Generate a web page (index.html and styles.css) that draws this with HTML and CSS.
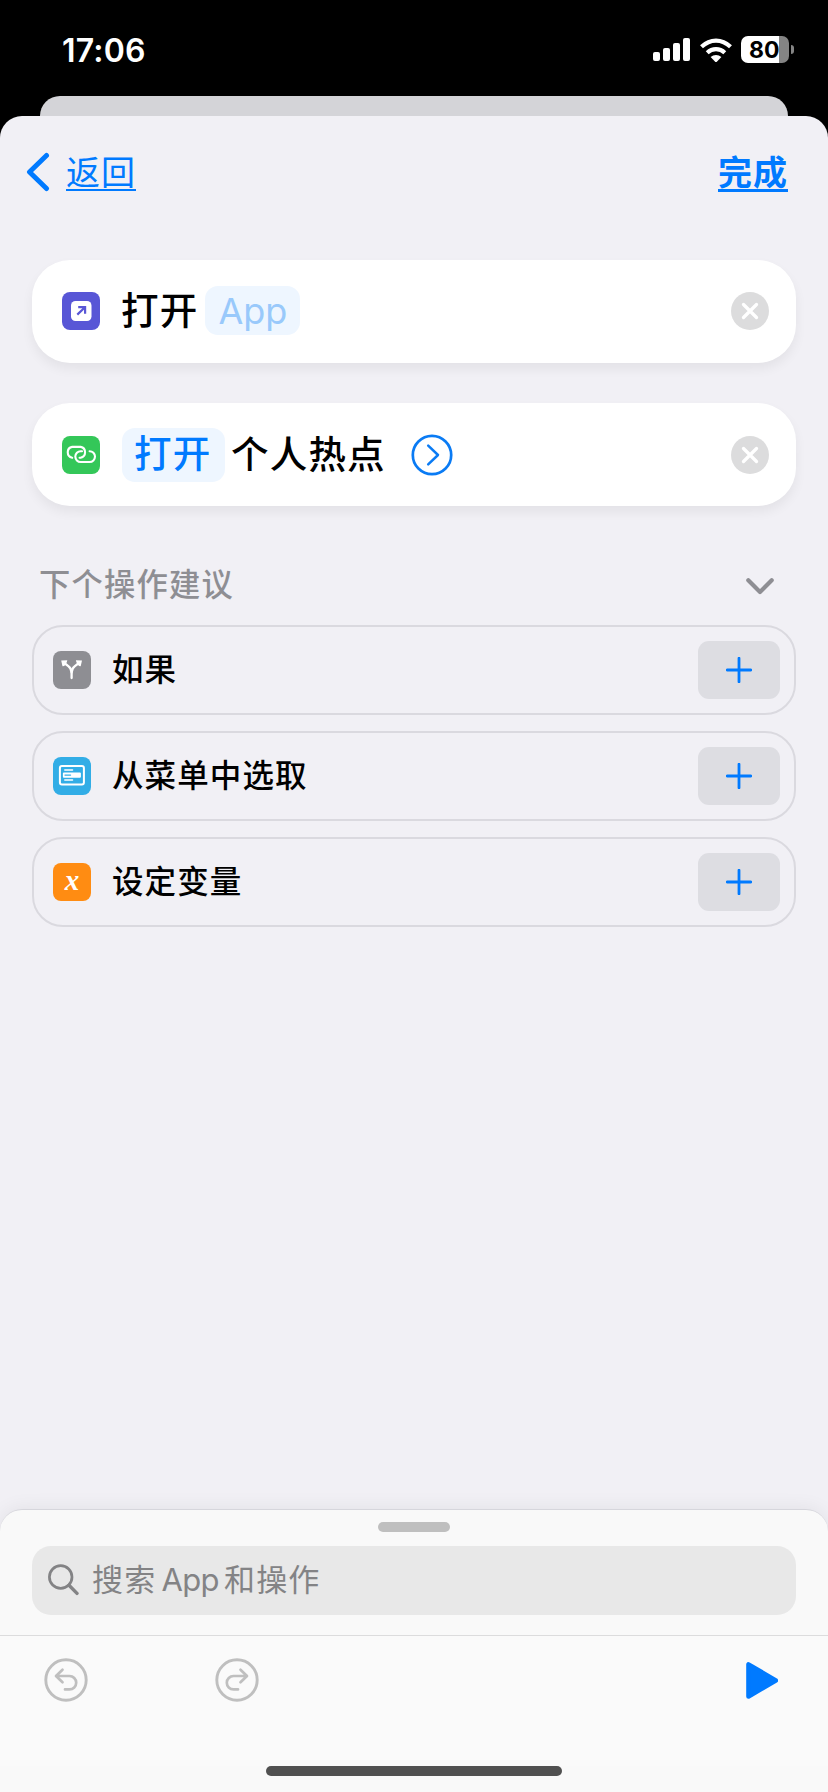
FILE: index.html
```html
<!DOCTYPE html>
<html lang="zh-CN">
<head>
<meta charset="utf-8">
<title>快捷指令</title>
<link rel="stylesheet" href="styles.css">
</head>
<body>
<div class="screen">
  <header class="status">
    <span class="time">17:06</span>
    <div class="indicators">
      <svg class="signal" width="37" height="23" viewBox="0 0 37 23" fill="#fff"><rect x="0" y="14" width="7" height="9" rx="2"/><rect x="10" y="10" width="7" height="13" rx="2"/><rect x="20" y="5" width="7" height="18" rx="2"/><rect x="30" y="0" width="7" height="23" rx="2"/></svg>
      <svg class="wifi" width="32" height="24" viewBox="0 0 32 24"><g fill="none" stroke="#fff" stroke-width="4.2"><path d="M1.5 8.8Q8 2.6 16 2.6T30.500 8.800"/><path d="M7.200 14.700Q11 11.200 16 11.200T24.800 14.700"/></g><path fill="#fff" d="M10.600 19Q13 17 16 17T21.400 19L16.600 23.900Q16 24.400 15.400 23.900Z"/></svg>
      <div class="battery"><span class="level">80</span></div>
      <span class="battery-tip"></span>
    </div>
  </header>
  <div class="sheet-behind"></div>
  <main class="sheet">
    <nav class="nav">
      <a class="back"><svg width="24" height="40" viewBox="0 0 24 40" fill="none" stroke="#007aff" stroke-width="5" stroke-linecap="round" stroke-linejoin="round"><path d="M20.500 3.500L3.500 20L20.500 36.500"/></svg><span class="link">返回</span></a>
      <a class="link done">完成</a>
    </nav>

    <section class="actions">
      <article class="card open-app">
        <svg class="tile" viewBox="0 0 38 38"><rect width="38" height="38" rx="8" fill="#5856d6"/><rect x="9" y="9" width="20.500" height="20" rx="4.500" fill="#fff"/><path d="M15.300 22.600L23 15.300M16.200 15.200H23.100V21.800" fill="none" stroke="#5856d6" stroke-width="2.200"/></svg>
        <span class="label">打开</span>
        <span class="token placeholder">App</span>
        <svg class="remove" viewBox="0 0 38 38"><circle cx="19" cy="19" r="19" fill="#dcdcdd"/><path d="M12.500 12.500L25.500 25.500M25.500 12.500L12.500 25.500" stroke="#fff" stroke-width="3.300" stroke-linecap="round"/></svg>
      </article>
      <article class="card">
        <svg class="tile" viewBox="0 0 38 38"><rect width="38" height="38" rx="8" fill="#34c759"/><g fill="none" stroke="#fff" stroke-width="2.100" stroke-linecap="round"><path d="M10.200 21.700A5.500 5.500 0 0 1 10.200 10.900H18.600A5.500 5.500 0 0 1 18.600 21.700H17.600"/><path d="M27.600 15.200A5.400 5.400 0 0 1 27.600 26H18.700A5.400 5.400 0 0 1 18.700 15.200H20"/></g></svg>
        <span class="token value">打开</span>
        <span class="label subject">个人热点</span>
        <svg class="disclose" width="42" height="42" viewBox="0 0 42 42" fill="none" stroke="#0a7bf4" stroke-linecap="round" stroke-linejoin="round"><circle cx="21" cy="21" r="19.200" stroke-width="2.700"/><path d="M17.200 11.700L27 21L17.200 30.300" stroke-width="2.500"/></svg>
        <svg class="remove" viewBox="0 0 38 38"><circle cx="19" cy="19" r="19" fill="#dcdcdd"/><path d="M12.500 12.500L25.500 25.500M25.500 12.500L12.500 25.500" stroke="#fff" stroke-width="3.300" stroke-linecap="round"/></svg>
      </article>
    </section>

    <section class="suggestions">
      <div class="heading">
        <h2 class="title">下个操作建议</h2>
        <svg class="collapse" width="28" height="17" viewBox="0 0 28 17" fill="none" stroke="#8e8e93" stroke-width="4.200" stroke-linecap="round" stroke-linejoin="round"><path d="M2.300 2.300L14 14L25.700 2.300"/></svg>
      </div>
      <div class="row">
        <svg class="tile" viewBox="0 0 38 38"><rect width="38" height="38" rx="8" fill="#8e8e93"/><g fill="none" stroke="#fff" stroke-width="2.300" stroke-linecap="round"><path d="M18.600 27V21.500Q18.600 17.600 15.300 15.100L11.300 12"/><path d="M18.600 21.500Q18.600 17.600 21.900 15.100L25.900 12"/></g><path fill="#fff" d="M8.200 9.500L14.300 9.200L13.800 11.200L11.300 15.100L9.500 15.200ZM29 9.500L22.900 9.200L23.400 11.200L25.900 15.100L27.700 15.200Z"/></svg>
        <span class="name">如果</span>
        <button class="add"><svg width="26" height="26" viewBox="0 0 26 26"><path d="M13 1.200V24.800M1.200 13H24.800"/></svg></button>
      </div>
      <div class="row">
        <svg class="tile" viewBox="0 0 38 38"><rect width="38" height="38" rx="8" fill="#32ade6"/><rect x="6.900" y="8.900" width="24" height="18.500" rx="2" fill="none" stroke="#fff" stroke-width="2"/><path d="M11.800 13.100H19.500M11.800 23.100H19.500" stroke="#fff" stroke-width="1.500" stroke-linecap="round"/><rect x="9.900" y="15.500" width="18" height="5.200" rx="1" fill="#fff"/><path d="M12 18.100H17.500" stroke="#32ade6" stroke-width="1.400" stroke-linecap="round"/></svg>
        <span class="name">从菜单中选取</span>
        <button class="add"><svg width="26" height="26" viewBox="0 0 26 26"><path d="M13 1.200V24.800M1.200 13H24.800"/></svg></button>
      </div>
      <div class="row">
        <span class="tile variable">x</span>
        <span class="name">设定变量</span>
        <button class="add"><svg width="26" height="26" viewBox="0 0 26 26"><path d="M13 1.200V24.800M1.200 13H24.800"/></svg></button>
      </div>
    </section>

    <footer class="drawer">
      <div class="grabber"></div>
      <div class="search">
        <svg width="31" height="32" viewBox="0 0 31 32" fill="none" stroke="#838385" stroke-linecap="round"><circle cx="12.700" cy="13" r="11.300" stroke-width="2.700"/><path d="M21 21.300L29 29.400" stroke-width="3.400"/></svg>
        <span class="hint">搜索<span class="latin">App</span>和操作</span>
      </div>
      <div class="toolbar">
        <svg class="undo" width="44" height="44" viewBox="0 0 44 44" fill="none" stroke="#bfbfbf" stroke-linecap="round" stroke-linejoin="round"><circle cx="22" cy="22" r="20.200" stroke-width="2.900"/><path d="M18.500 11.700L12 18L18.500 24.300M12.500 18H25.500A6.700 6.700 0 0 1 25.500 31.400H21" stroke-width="2.700"/></svg>
        <svg class="redo" width="44" height="44" viewBox="0 0 44 44" fill="none" stroke="#bfbfbf" stroke-linecap="round" stroke-linejoin="round"><circle cx="22" cy="22" r="20.200" stroke-width="2.900"/><path d="M25.500 11.700L32 18L25.500 24.300M31.500 18H18.500A6.700 6.700 0 0 0 18.500 31.400H23" stroke-width="2.700"/></svg>
        <svg class="play" width="32" height="37" viewBox="0 0 32 37"><path d="M2.500 2.500V34.500L29.800 18.400Z" fill="#007aff" stroke="#007aff" stroke-width="4.600" stroke-linejoin="round"/></svg>
      </div>
      <div class="home"></div>
    </footer>
  </main>
</div>
</body>
</html>
```
FILE: styles.css
```css
* { box-sizing: border-box; }
body { margin: 0; background: #000; }
svg { display: block; flex: none; }

.screen {
  width: 828px;
  height: 1792px;
  display: flex;
  flex-direction: column;
  overflow: hidden;
  background: #000;
  font-family: Inter, "Noto Sans CJK SC", sans-serif;
}

.status {
  height: 96px;
  flex: none;
  display: flex;
  justify-content: space-between;
  padding: 0 34px 0 62px;
}
.time { margin-top: 31px; font-size: 32px; line-height: 40px; letter-spacing: 0.200px; font-weight: 600; color: #fff; }
.indicators { display: flex; align-items: center; height: 27px; margin-top: 36px; }
.wifi { margin-left: 10px; }
.battery {
  width: 48px;
  height: 27px;
  margin-left: 9px;
  border-radius: 7px;
  background: linear-gradient(90deg, #fff 38px, #848484 38px);
}
.level {
  display: block;
  padding-left: 8px;
  font-size: 23px;
  line-height: 28px;
  font-weight: 700;
  color: #000;
}
.battery-tip { width: 3px; height: 9px; margin-left: 2px; border-radius: 0 3px 3px 0; background: #848484; }

.sheet-behind { flex: none; height: 20px; margin: 0 40px; border-radius: 20px 20px 0 0; background: #d4d4d8; }

.sheet {
  flex: 1;
  display: flex;
  flex-direction: column;
  border-radius: 22px 22px 0 0;
  background: #f1f0f5;
  overflow: hidden;
}

.nav {
  display: flex;
  justify-content: space-between;
  height: 144px;
  flex: none;
  padding: 31px 40px 0 26px;
}
.back { display: flex; gap: 16px; height: 52px; }
.back svg { margin-top: 5px; }
.link {
  height: 52px;
  line-height: 52px;
  font-size: 34px;
  letter-spacing: 1px;
  color: #007aff;
  text-decoration: underline;
  text-decoration-thickness: 2px;
  text-underline-offset: 4px;
  text-decoration-skip-ink: none;
}
.done { font-weight: 700; text-decoration-thickness: 3px; }

.actions { display: flex; flex-direction: column; gap: 40px; padding: 0 32px; }
.card {
  height: 103px;
  display: flex;
  align-items: center;
  padding: 0 27px 0 30px;
  border-radius: 38px;
  background: #fff;
  box-shadow: 0 6px 12px rgba(0, 0, 0, 0.06);
}
.open-app { padding-bottom: 1px; }
.tile { width: 38px; height: 38px; flex: none; }
.label, .token { font-size: 37.500px; letter-spacing: 1.200px; white-space: nowrap; }
.label { margin-left: 21px; line-height: 54px; font-weight: 500; color: #000; }
.token { border-radius: 13px; background: #eef6ff; }
.placeholder {
  width: 95px;
  height: 49px;
  margin: 0 0 2px 7px;
  text-align: center;
  line-height: 50px;
  font-size: 36px;
  letter-spacing: 0;
  color: #99c9fb;
}
.value {
  width: 103px;
  height: 54px;
  margin: 1px 0 0 22px;
  padding-left: 12px;
  line-height: 51px;
  font-weight: 500;
  color: #007aff;
}
.subject { margin-left: 6px; }
.disclose { margin-left: 25px; }
.remove { width: 38px; height: 38px; margin-left: auto; }

.suggestions { display: flex; flex-direction: column; gap: 16px; padding: 54px 32px 0; }
.heading {
  height: 49px;
  display: flex;
  align-items: center;
  justify-content: space-between;
  padding: 0 22px 0 7px;
}
.collapse { margin-top: 4px; }
.title { margin: 0; font-size: 31.300px; line-height: 48px; letter-spacing: 1.200px; font-weight: 500; color: #8e8e93; }
.row {
  height: 90px;
  display: flex;
  align-items: center;
  padding: 0 14px 0 19px;
  border: 2px solid #dad9df;
  border-radius: 31px;
}
.name { margin: 0 0 1px 21px; font-size: 31.500px; line-height: 48px; letter-spacing: 1.100px; font-weight: 500; color: #000; }
.variable {
  border-radius: 8px;
  background: #ff8c12;
  color: #fff;
  text-align: center;
  font: italic bold 29px/34px "Liberation Serif", serif;
}
.add {
  width: 82px;
  height: 58px;
  display: flex;
  align-items: center;
  justify-content: center;
  margin-left: auto;
  padding: 0;
  border: 0;
  border-radius: 11px;
  background: #dddde2;
}
.add path { fill: none; stroke: #007aff; stroke-width: 2.800; stroke-linecap: round; }

.drawer {
  height: 283px;
  flex: none;
  display: flex;
  flex-direction: column;
  margin-top: auto;
  border-top: 1px solid #d6d6dc;
  border-radius: 22px 22px 0 0;
  background: #f9f9f9;
  box-shadow: 0 0 20px rgba(0, 0, 0, 0.07);
}
.grabber { width: 72px; height: 10px; flex: none; margin: 12px auto 14px; border-radius: 5px; background: #bfbfbf; }
.search {
  height: 69px;
  flex: none;
  display: flex;
  align-items: center;
  margin: 0 32px;
  padding: 0 0 1px 16px;
  border-radius: 19px;
  background: #e8e8e8;
}
.hint { margin-left: 13px; font-size: 31px; line-height: 48px; letter-spacing: 1.200px; color: #838385; white-space: nowrap; }
.latin { margin: 0 5px; letter-spacing: -0.600px; }
.toolbar {
  display: flex;
  align-items: flex-start;
  flex: none;
  height: 131px;
  margin-top: 20px;
  padding: 22px 50px 0 44px;
  border-top: 1px solid #dcdcdd;
  background: #fafafa;
}
.redo { margin-left: 127px; }
.play { margin: 4px 0 0 auto; }
.home { width: 296px; height: 10px; flex: none; margin: 0 auto; border-radius: 5px; background: #505050; }
```
